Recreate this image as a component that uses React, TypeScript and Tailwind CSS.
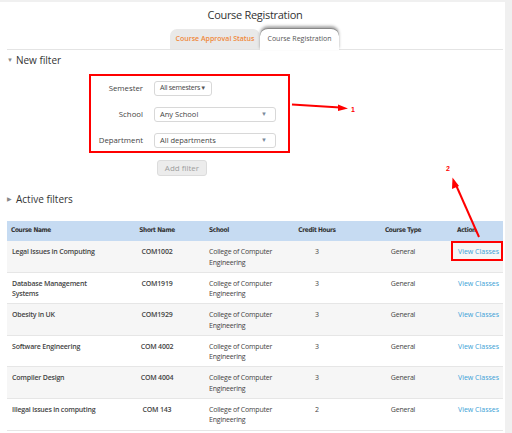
import React from 'react'

const rows = [
  { name: 'Legal Issues in Computing', short: 'COM1002', hours: '3' },
  { name: 'Database Management Systems', short: 'COM1919', hours: '3' },
  { name: 'Obesity in UK', short: 'COM1929', hours: '3' },
  { name: 'Software Engineering', short: 'COM 4002', hours: '3' },
  { name: 'Compiler Design', short: 'COM 4004', hours: '3' },
  { name: 'Illegal issues in computing', short: 'COM 143', hours: '2' },
]

const cols = 'grid grid-cols-[120px_60px_98px_64px_108px_46px]'

function Select({ label, value, wide }: { label: string; value: string; wide?: boolean }) {
  return (
    <div className="flex h-[15px] items-center">
      <span className="w-[52px] text-right text-[7.8px] text-[#444]">{label}</span>
      {wide ? (
        <div className="ml-[11px] flex h-[15px] w-[122px] items-center justify-between rounded-[3px] border border-[#d8d8d8] bg-white pl-[5px] pr-[8px] text-[7.5px] text-[#444]">
          <span className="whitespace-nowrap">{value}</span>
          <span className="text-[6px] text-[#7a8a9c]">▼</span>
        </div>
      ) : (
        <div className="ml-[11px] flex h-[15px] w-[58px] items-center rounded-[3px] border border-[#d8d8d8] bg-white pl-[5px] text-[7px] tracking-[-0.25px] text-[#444]">
          <span className="whitespace-nowrap">{value}</span>
          <span className="text-[6px] text-[#555]">▼</span>
        </div>
      )}
    </div>
  )
}

export default function App() {
  return (
    <div className="relative h-[433px] w-[512px] overflow-hidden border-t-2 border-r-[7px] border-[#f0f0f0] bg-white font-['Open_Sans',sans-serif]">
      <div className="pl-[7px] pr-[2px]">
        <h1 className="pt-[5px] text-center text-[11px] leading-[16px] tracking-[-0.3px] text-[#333]">Course Registration</h1>

        <div className="mt-[3px] flex h-[24px] items-end border-b border-[#e4e4e4]">
          <div className="ml-[163px] flex h-[20px] w-[90px] items-center justify-center rounded-t-[7px] bg-[#e9e9e9] text-[7px] font-semibold text-[#f0883a]">
            Course Approval Status
          </div>
          <div className="-mb-px flex h-[22px] w-[79px] items-center justify-center rounded-t-[8px] border-t border-[#888] bg-white text-[7px] text-[#555] shadow-[0_-2px_3px_rgba(0,0,0,0.35)]">
            Course Registration
          </div>
        </div>

        <div className="mt-[3px] flex items-center gap-[3px] text-[10px] leading-[14px] text-[#333]">
          <span className="text-[6px] text-[#888]">▼</span>
          <span className="font-medium">New filter</span>
        </div>

        <div className="ml-[82px] mt-[7px] flex h-[79px] w-[201px] flex-col gap-[11px] border-2 border-[#f00] pt-[5px]">
          <Select label="Semester" value="All semesters" />
          <Select label="School" value="Any School" wide />
          <Select label="Department" value="All departments" wide />
        </div>

        <div className="ml-[150px] mt-[7px] flex h-[16px] w-[50px] items-center justify-center rounded-[3px] border border-[#dcdcdc] bg-[#ececec] text-[8px] text-[#9e9e9e]">
          Add filter
        </div>

        <div className="mt-[16px] flex items-center gap-[4px] text-[10px] leading-[14px] text-[#333]">
          <span className="text-[6px] text-[#888]">▶</span>
          <span className="font-medium">Active filters</span>
        </div>

        <div className="mt-[15px] w-[496px]">
          <div className={`${cols} h-[20px] items-center bg-[#c6dbf2] font-['DejaVu_Sans_Condensed',sans-serif] text-[6.5px] font-bold tracking-[-0.35px] text-[#333]`}>
            <span className="pl-[4px]">Course Name</span>
            <span className="text-center">Short Name</span>
            <span className="pl-[22px]">School</span>
            <span className="text-center">Credit Hours</span>
            <span className="text-center">Course Type</span>
            <span>Action</span>
          </div>
          {rows.map((r, i) => (
            <div
              key={r.short}
              className={`${cols} h-[31.6px] border-b border-[#e6e6e6] pt-[6px] text-[7px] leading-[10.5px] tracking-[-0.2px] ${i % 2 === 0 ? 'bg-[#f6f6f6]' : 'bg-white'}`}
            >
              <span className="pl-[5px] pr-[22px] font-semibold text-[#444]">{r.name}</span>
              <span className="text-center font-semibold text-[#444]">{r.short}</span>
              <span className="pl-[22px] text-[#444]">College of Computer Engineering</span>
              <span className="text-center text-[#444]">{r.hours}</span>
              <span className="text-center text-[#444]">General</span>
              <span className="relative pl-[1px] tracking-normal text-[#3a9fd6]">
                View Classes
                {i === 0 && <span className="absolute -left-[6px] -top-[6px] h-[20px] w-[52px] border-2 border-[#f00]" />}
              </span>
            </div>
          ))}
        </div>
      </div>

      <svg className="pointer-events-none absolute left-0 top-[-2px]" width="512" height="433" viewBox="0 0 512 433">
        <line x1="292" y1="104.5" x2="340" y2="107.5" stroke="#f00" strokeWidth="2" />
        <polygon points="348,108.5 338,104.5 338,111" fill="#f00" />
        <text x="351" y="111.5" fill="#f00" fontSize="7" fontWeight="bold" fontFamily="Liberation Sans, sans-serif">1</text>
        <line x1="479" y1="237" x2="456" y2="185" stroke="#f00" strokeWidth="2" />
        <polygon points="452.5,177.5 452,189 459,186" fill="#f00" />
        <text x="446" y="170.5" fill="#f00" fontSize="7" fontWeight="bold" fontFamily="Liberation Sans, sans-serif">2</text>
      </svg>
    </div>
  )
}
